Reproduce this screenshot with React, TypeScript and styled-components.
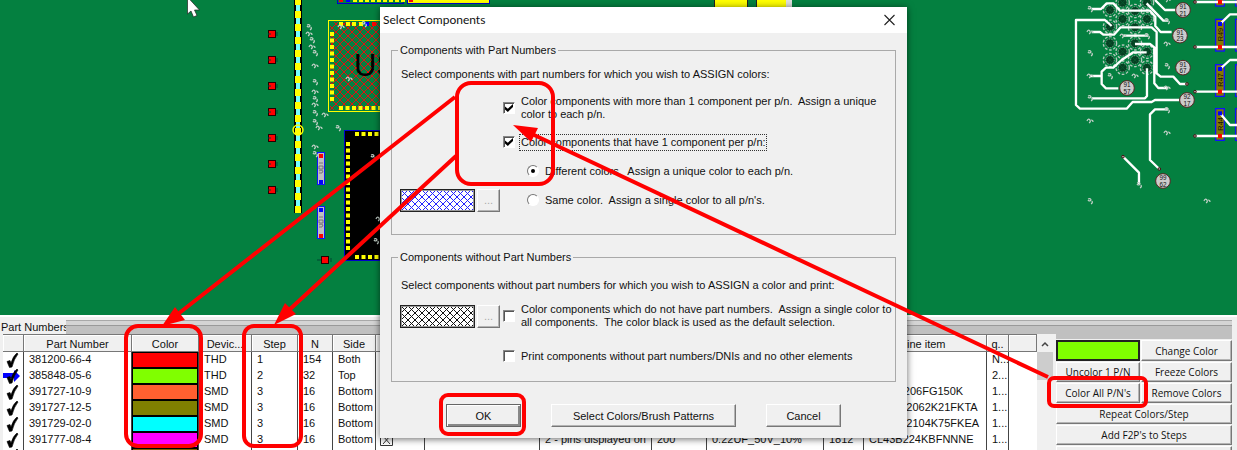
import React from "react";
import styled, { createGlobalStyle, css } from "styled-components";

const sans = '"Liberation Sans", Arial, sans-serif';
const titleFont = 'Lato, "Liberation Sans", sans-serif';
const ui = '"Open Sans", "Noto Sans", sans-serif';

const GlobalStyle = createGlobalStyle`
  *, *::before, *::after { box-sizing: border-box; }
  body { margin: 0; background: #f0f0f0; color: #111; font: 11px/14px ${sans}; }
  button, input { font: inherit; color: inherit; margin: 0; padding: 0; }
`;

const Screen = styled.main`
  position: relative;
  display: flex;
  flex-direction: column;
  height: 100vh;
  overflow: hidden;
`;

const BoardArt = styled.svg`
  display: block;
  flex: none;
  width: 100%;
  height: 315px;
  background: #048040;
`;

const Panel = styled.section`
  flex: 1;
  min-height: 0;
  display: flex;
  flex-direction: column;
  border-top: 2px solid #fff;
  background: #f0f0f0;
`;

const PanelHeading = styled.header`
  display: flex;
  flex: none;
  height: 16px;
  margin-top: 1px;
`;

const PanelTitle = styled.h2`
  margin: 0;
  padding: 2px 0 0 1px;
  width: 66px;
  white-space: nowrap;
  font: 11px/14px ${sans};
`;

const Grip = styled.div`
  flex: 1;
  margin: 2px 5px 0 0;
  border-top: 1px solid #a8a8a8;
  background: linear-gradient(#d4d4d4 0 4px, #999 4px 5px, #c0c0c0 5px);
`;

const PanelBody = styled.div`
  flex: 1;
  min-height: 0;
  display: flex;
  padding: 0 5px 0 3px;
`;

const TableArea = styled.div`
  flex: 1;
  min-width: 0;
  overflow: hidden;
  background: #fff;
  border-top: 1px solid #777;
`;

const Grid = styled.table`
  width: 100%;
  table-layout: fixed;
  border-collapse: separate;
  border-spacing: 0;
`;

const HeadCell = styled.th`
  height: 17px;
  padding: 1px 0 0;
  border-right: 1px solid #777;
  border-bottom: 1px solid #777;
  background: #f0f0f0;
  box-shadow: inset 1px 1px #fff;
  font-weight: normal;
  line-height: 14px;
  white-space: nowrap;
  overflow: hidden;
`;

const Cell = styled.td<{ $bare?: boolean }>`
  height: 16px;
  padding: 0 0 2px 5px;
  border-right: 1px solid #444;
  line-height: 14px;
  white-space: nowrap;
  overflow: hidden;
  ${(p) => p.$bare && css`padding: 0;`}
`;

const ColorChip = styled.div<{ $color: string }>`
  height: 16px;
  border: 1px solid #000;
  background: ${(p) => p.$color};
`;

const CellIcon = styled.svg`
  display: block;
  width: 19px;
  height: 16px;
`;

const ScrollBar = styled.div`
  flex: none;
  width: 16px;
  margin-right: 3px;
  background: #f0f0f0;
`;

const ScrollUp = styled.button`
  display: block;
  width: 16px;
  height: 18px;
  border: 0;
  background: none;
`;

const ScrollThumb = styled.div`
  height: 28px;
  background: #cdcdcd;
`;

const Actions = styled.div`
  flex: none;
  width: 176px;
  display: grid;
  grid-template-columns: 84px 91px;
  grid-template-rows: 21px;
  grid-auto-rows: 20px;
  align-content: start;
  gap: 1px;
  padding-top: 6px;
  box-shadow: inset 0 5px #c0c0c0;
`;

const raised = css`
  border: 1px solid;
  border-color: #fff #777 #777 #fff;
  background: #f0f0f0;
  box-shadow: inset -1px -1px #b4b4b4;
`;

const ActionButton = styled.button<{ $wide?: boolean }>`
  ${raised}
  font: 10px/16px ${ui};
  white-space: nowrap;
  ${(p) => p.$wide && css`grid-column: span 2;`}
`;

const CurrentColor = styled.button`
  border: 2px solid #222;
  background: #80ff00;
`;

const Dialog = styled.section`
  position: absolute;
  top: 7px;
  left: 380px;
  width: 527px;
  background: #f0f0f0;
  box-shadow: 0 1px 7px rgba(0, 0, 0, 0.6);
`;

const TitleBar = styled.header`
  display: flex;
  align-items: center;
  justify-content: space-between;
  height: 26px;
  padding: 0 11px 0 3px;
  background: #fff;
`;

const Title = styled.h1`
  margin: 0;
  font: 12px/16px ${titleFont};
`;

const CloseButton = styled.button`
  display: flex;
  border: 0;
  background: none;
`;

const DialogBody = styled.form`
  display: flex;
  flex-direction: column;
  gap: 15px;
  padding: 10px 11px 11px;
`;

const Group = styled.fieldset<{ $roomy?: boolean }>`
  min-width: 0;
  margin: 0;
  border: 1px solid #a9a9a9;
  padding: ${(p) => (p.$roomy ? "14px 8px 17px" : "10px 8px 26px")};
`;

const Legend = styled.legend`
  margin-left: -2px;
  padding: 0 2px;
`;

const Intro = styled.p<{ $gap: number }>`
  margin: 0 0 ${(p) => p.$gap}px 1px;
`;

const Options = styled.div<{ $gap: number }>`
  display: grid;
  row-gap: ${(p) => p.$gap}px;
`;

const OptionRow = styled.div<{ $tall?: boolean }>`
  display: grid;
  grid-template-columns: 103px 1fr;
  grid-template-rows: 100%;
  align-items: center;
  height: ${(p) => (p.$tall ? 26 : 16)}px;
  line-height: 13px;
`;

const BrushPicker = styled.div`
  display: flex;
  gap: 2px;
`;

const BrushSwatch = styled.svg`
  width: 75px;
  height: 23px;
  border: 1px solid #222;
  outline: 1px solid #999;
  outline-offset: -2px;
  background: #fff;
`;

const BrushButton = styled.button`
  ${raised}
  width: 23px;
  height: 23px;
  color: #aaa;
`;

const Option = styled.label<{ $nested?: boolean }>`
  grid-column: 2;
  display: flex;
  align-items: center;
  gap: 5px;
  padding-left: ${(p) => (p.$nested ? 24 : 0)}px;
`;

const OptionText = styled.span<{ $focused?: boolean }>`
  padding: 1px 0 1px 1px;
  white-space: pre;
  ${(p) => p.$focused && css`outline: 1px dotted #333;`}
`;

const Tick = styled.input`
  appearance: none;
  flex: none;
  width: 12px;
  height: 12px;
  border: 1px solid;
  border-color: #888 #fff #fff #888;
  background: #fff;
  box-shadow: inset 1px 1px #555;

  &:checked::after {
    content: "";
    display: block;
    width: 8px;
    height: 8px;
    margin: 1px;
    background: #000;
    clip-path: polygon(0 30%, 35% 58%, 100% 0, 100% 38%, 35% 100%, 0 68%);
  }
`;

const Radio = styled.input`
  appearance: none;
  flex: none;
  width: 12px;
  height: 12px;
  border: 1px solid;
  border-color: #777 #fff #fff #777;
  border-radius: 50%;
  background: #fff;

  &:checked::after {
    content: "";
    display: block;
    width: 4px;
    height: 4px;
    margin: 3px;
    border-radius: 50%;
    background: #000;
  }
`;

const DialogActions = styled.footer`
  display: flex;
  gap: 30px;
  margin-top: 7px;
  padding-left: 55px;
`;

const DialogButton = styled.button<{ $wide?: boolean; $primary?: boolean }>`
  ${raised}
  width: ${(p) => (p.$wide ? 185 : 75)}px;
  height: 23px;
  ${(p) => p.$primary && css`
    border-color: #666;
    box-shadow: inset 1px 1px #fff, inset -2px -2px #888;
  `}
`;

const Markup = styled.svg`
  position: absolute;
  inset: 0;
  width: 100%;
  height: 100%;
  pointer-events: none;
`;

const range = (n: number, start: number, step: number) =>
  Array.from({ length: n }, (_, i) => start + i * step);

function Pads({ points, fill = "#ff0", size = 4 }: { points: number[][]; fill?: string; size?: number }) {
  return (
    <g fill={fill}>
      {points.map(([x, y]) => (
        <rect key={`${x},${y}`} x={x - size / 2} y={y - size / 2} width={size} height={size} />
      ))}
    </g>
  );
}

function Vias({ points }: { points: number[][] }) {
  return (
    <g fill="none" stroke="#c4d0c8" strokeWidth="1.2">
      {points.map(([x, y], i) => (
        <path
          key={`${x},${y}`}
          d={i % 2 ? "M-3 0q1-3 3-1q1 2-1 3M1-1q2 0 2 2" : "M-2-2q3-1 3 1q-2 2-3 0M2 0q1 2-1 3"}
          transform={`translate(${x} ${y})`}
        />
      ))}
    </g>
  );
}

function ChipResistor({ y, flip }: { y: number; flip?: boolean }) {
  return (
    <g>
      <rect x="317.5" y={y + 0.5} width="7" height="32" fill="#c0c0c0" stroke="#11f" />
      <Pads points={[[321, y + 4]]} fill={flip ? "#00f" : "#f00"} />
      <Pads points={[[321, y + 30]]} fill={flip ? "#f00" : "#00f"} />
      <path
        d={`M319 ${y + 14}h4v3h-4zM319 ${y + 19}q2-2 4 0q0 3-4 2M319 ${y + 11}h4`}
        fill="none"
        stroke="#666"
        strokeWidth=".8"
      />
    </g>
  );
}

const leftVias = [
  [309, 27], [309, 34], [312, 40], [312, 47], [315, 53], [315, 66], [315, 82], [315, 92], [315, 99],
  [315, 105], [315, 113], [325, 115], [315, 122], [319, 128], [338, 128], [315, 147], [315, 154],
  [341, 27], [364, 24], [349, 79], [373, 157], [379, 219], [376, 241],
];

const rightVias = [
  [1090, 9], [1090, 32], [1090, 53], [1090, 76], [1090, 98], [1090, 121], [1090, 201], [1207, 201],
  [1167, 21], [1167, 44], [1167, 66], [1167, 88], [1167, 110], [1167, 133], [1110, 76], [1135, 76],
  [1139, 185], [1123, 36], [1147, 36], [1167, 0],
];

const ballGrid = [
  [630, 30], [630, 80], [630, 130], [630, 180], [668, 8], [668, 57], [668, 155], [668, 203],
  [705, 33], [705, 82], [705, 130], [705, 180], [741, 8], [741, 57], [741, 155], [741, 203],
];

const traces = [
  "M575 27H603L620 10H640L660 32H740",
  "M635 78L615 60H528V315L540 326H680L698 306H755L765 300H838",
  "M575 96H600L610 104H642L662 82H755L770 96V220L782 230H820L840 252H860",
  "M670 107H745",
  "M570 228H605M740 157H700L665 180L640 203H618L605 215V252L618 265H655",
  "M705 132H750L763 142V250L775 264H805",
  "M575 295H735L741 288V205",
  "M765 0L795 30H828",
  "M740 10L790 62H805",
  "M735 32H750L766 50V78L782 96H815",
  "M805 328H765L750 343V480L778 507",
  "M669 470L717 518V552",
  "M885 6H1100M885 141H1100M885 275H1100M885 408H1100",
  "M960 72L990 43H1100M960 207L990 180H1100M960 340L990 375H1100",
];

const testPoints: [number, number, string, string][] = [
  [849, 30, "91", "21"], [840, 107, "91", "23"], [849, 203, "91", "67"],
  [681, 264, "91", "57"], [861, 300, "92", "17"], [789, 543, "99", "62"],
];

const resistors: [string, number][] = [["", -77], ["R49", 58], ["R47", 194], ["R44", 326]];

function Board() {
  return (
    <BoardArt role="img" aria-label="Circuit board layout">
      <defs>
        <pattern id="redHatch" width="8" height="8" patternUnits="userSpaceOnUse">
          <path d="M0 0L8 8M8 0L0 8" stroke="#e01010" strokeWidth="1" />
        </pattern>
      </defs>

      {range(7, 34, 26).map((y) => (
        <g key={y}>
          <rect x="268.5" y={y - 3.5} width="7" height="7" fill="#f00" stroke="#200" />
          <path d={`M268 ${y}h3M277 ${y - 2}v4`} stroke="#043" />
        </g>
      ))}
      <rect x="321.5" y="256.5" width="7" height="7" fill="#f00" stroke="#200" />
      <path d="M317 260h4M331 258v4" stroke="#043" />

      <rect x="294" y="-2" width="8" height="215" fill="#000" />
      <rect x="296" y="-2" width="4" height="214" fill="#7ff" />
      {range(17, 1, 13).map((y) => (
        <path key={y} d={`M295 ${y - 3}h6v7h-6z`} fill="#ff0" />
      ))}
      <circle cx="298" cy="130" r="5" fill="none" stroke="#ff0" strokeWidth="1.4" />

      <rect x="337.5" y="-5" width="66" height="8.5" fill="#048040" stroke="#00c" />
      <Pads points={range(9, 355, 6).map((x) => [x, 0])} />
      <Pads points={[[341, 0]]} fill="#f00" />
      <Pads points={[[348, 0]]} fill="#00f" />
      <rect x="407.5" y="-5" width="82" height="8.5" fill="#ff0" stroke="#00c" />
      <Pads points={[[411, 0]]} fill="#f00" />
      <path d="M715 0h32v7h-32zM757 0h29v7h-29z" fill="#ff0" />
      <path d="M714.5 0v7M756.5 0v7M747.5 0v7" stroke="#222" />
      <path d="M786 0h6v7h-6z" fill="#ddd" />

      <rect x="328.5" y="20.5" width="90" height="91" fill="none" stroke="#ff0" />
      <rect x="330" y="22" width="88" height="88" fill="url(#redHatch)" />
      <Pads points={range(11, 34, 6.5).map((y) => [332, y])} />
      <Pads points={[341, 348, 354, 361].map((x) => [x, 24])} />
      <Pads points={[[367, 24]]} fill="#00f" />
      <Pads points={[[374, 24]]} fill="#f00" />
      <Pads points={range(7, 341, 6.5).map((x) => [x, 108])} />
      <text x="354" y="76" fontSize="31" fontFamily="Liberation Sans, sans-serif">US</text>

      <rect x="344.5" y="130.5" width="120" height="130" fill="#000" stroke="#00c" />
      <Pads points={range(17, 144, 6.5).map((y) => [348, y])} />
      <Pads points={range(4, 357, 6.5).map((x) => [x, 134])} />
      <Pads points={range(4, 357, 6.5).map((x) => [x, 257])} />

      <ChipResistor y={152} />
      <ChipResistor y={206} flip />
      <Vias points={leftVias} />

      <g transform="translate(900 0) scale(.3333)">
        {ballGrid.map(([x, y]) => (
          <g key={`${x},${y}`} fill="none">
            <circle cx={x} cy={y} r="12" fill="#063f22" />
            <circle cx={x} cy={y} r="20" stroke="#b8c8be" strokeWidth="4" strokeDasharray="8 5" />
            <circle cx={x} cy={y} r="13" stroke="#8a9a90" strokeWidth="3" strokeDasharray="4 4" />
            <path d={`M${x - 8} ${y - 8}l16 16M${x + 8} ${y - 8}l-16 16`} stroke="#06552c" strokeWidth="3" />
          </g>
        ))}
        {resistors.map(([name, y]) => (
          <g key={y}>
            {[947, 1007].map((x) => (
              <rect key={x} x={x} y={y} width="26" height="95" fill="#867800" stroke="#11f" strokeWidth="4" />
            ))}
            {name && (
              <text transform={`translate(968 ${y + 66}) rotate(-90)`} fontSize="22" fill="#111">{name}</text>
            )}
          </g>
        ))}
        <path d={traces.join("")} fill="none" stroke="#fff" strokeWidth="7" strokeLinejoin="round" />
        <Pads points={[[960, 72], [960, 207], [960, 340]]} fill="#00f" size={12} />
        <Pads points={[[960, 6], [960, 141], [960, 275], [960, 408]]} fill="#f00" size={12} />
        {[[861, 252], [885, 6], [885, 141], [885, 275], [885, 408], [669, 470], [778, 507]].map(([x, y]) => (
          <circle key={`${x},${y}`} cx={x} cy={y} r="4" fill="#aaa" stroke="#411" strokeWidth="3" />
        ))}
        {testPoints.map(([x, y, a, b]) => (
          <g key={`${x},${y}`} fontSize="19" textAnchor="middle" fill="#111">
            <circle cx={x} cy={y} r="22" fill="#ccc" stroke="#522" strokeWidth="3" />
            <text x={x} y={y - 3}>{a}</text>
            <text x={x} y={y + 17}>{b}</text>
          </g>
        ))}
      </g>
      <Vias points={rightVias} />
      <path d="M187.5-3V14L191 11L193.5 17L197 15.5L194.5 10H199.5Z" fill="#fff" stroke="#222" strokeWidth=".7" />
    </BoardArt>
  );
}

const columns: [string, number][] = [
  ["", 21], ["Part Number", 108], ["Color", 67], ["Devic...", 53], ["Step", 46], ["N", 35], ["Side", 43],
  ["DNI", 49], ["Description", 115], ["Comment", 112], ["Height", 55], ["Value", 117], ["Size", 40],
  ["line item", 123], ["q..", 22],
];

type Part = {
  pn: string;
  color: string;
  dev: string;
  step: string;
  n: string;
  side: string;
  item?: string;
  q: string;
  current?: boolean;
  details?: string[];
};

const parts: Part[] = [
  { pn: "381200-66-4", color: "#f00", dev: "THD", step: "1", n: "154", side: "Both", q: "N..." },
  { pn: "385848-05-6", color: "#80ff00", dev: "THD", step: "2", n: "32", side: "Top", q: "2...", current: true },
  { pn: "391727-10-9", color: "#ff6030", dev: "SMD", step: "3", n: "16", side: "Bottom", item: "CRM-1206FG150K", q: "1..." },
  { pn: "391727-12-5", color: "#808000", dev: "SMD", step: "3", n: "16", side: "Bottom", item: "RCCA12062K21FKTA", q: "1..." },
  { pn: "391729-02-0", color: "#0ff", dev: "SMD", step: "3", n: "16", side: "Bottom", item: "RCCA12104K75FKEA", q: "1..." },
  {
    pn: "391777-08-4", color: "#f0f", dev: "SMD", step: "3", n: "16", side: "Bottom", item: "CL43B224KBFNNNE", q: "1...",
    details: ["2 - pins displayed on", "200", "0.22UF_50V_10%", "1812"],
  },
  { pn: "", color: "#806000", dev: "", step: "", n: "", side: "", q: "" },
];

function PartRow({ part }: { part: Part }) {
  const details = part.details ?? ["", "", "", ""];
  return (
    <tr>
      <Cell $bare>
        <CellIcon>
          {part.current && <path d="M0 5H11V2L17 8L11 14V10H0Z" fill="#00f" />}
          <path d="M4 9.5L7 8.5L8 11Q10 4 14 1L15 2Q11 7 9 15L6.5 15.5Z" fill="#000" stroke="#000" strokeWidth=".6" />
        </CellIcon>
      </Cell>
      <Cell>{part.pn}</Cell>
      <Cell $bare><ColorChip $color={part.color} /></Cell>
      <Cell>{part.dev}</Cell>
      <Cell>{part.step}</Cell>
      <Cell>{part.n}</Cell>
      <Cell>{part.side}</Cell>
      <Cell $bare>
        <CellIcon>
          <path d="M4.5 2.5h12v11h-12zM7 4l7 8M14 4l-7 8" fill="none" stroke="#333" />
        </CellIcon>
      </Cell>
      <Cell />
      {details.map((text, i) => <Cell key={i}>{text}</Cell>)}
      <Cell>{part.item}</Cell>
      <Cell>{part.q}</Cell>
      <td />
    </tr>
  );
}

function Brush({ id, color, label }: { id: string; color: string; label: string }) {
  return (
    <BrushPicker>
      <BrushSwatch role="img" aria-label={label}>
        <defs>
          <pattern id={id} width="7" height="7" patternUnits="userSpaceOnUse">
            <path d="M0 0L7 7M7 0L0 7" stroke={color} />
          </pattern>
        </defs>
        <rect width="100%" height="100%" fill={`url(#${id})`} />
      </BrushSwatch>
      <BrushButton type="button" disabled aria-label={`Choose ${label}`}>...</BrushButton>
    </BrushPicker>
  );
}

function SelectComponents() {
  return (
    <Dialog role="dialog" aria-labelledby="dialog-title">
      <TitleBar>
        <Title id="dialog-title">Select Components</Title>
        <CloseButton type="button" aria-label="Close">
          <svg width="13" height="12"><path d="M1.5 1L11.5 11M11.5 1L1.5 11" stroke="#222" strokeWidth="1.1" /></svg>
        </CloseButton>
      </TitleBar>
      <DialogBody onSubmit={(e) => e.preventDefault()}>
        <Group>
          <Legend>Components with Part Numbers</Legend>
          <Intro $gap={14}>Select components with part numbers for which you wish to ASSIGN colors:</Intro>
          <Options $gap={13}>
            <OptionRow $tall>
              <Option>
                <Tick type="checkbox" defaultChecked />
                <OptionText>{"Color components with more than 1 component per p/n.  Assign a unique\ncolor to each p/n."}</OptionText>
              </Option>
            </OptionRow>
            <OptionRow>
              <Option>
                <Tick type="checkbox" defaultChecked />
                <OptionText $focused>Color components that have 1 component per p/n:</OptionText>
              </Option>
            </OptionRow>
            <OptionRow>
              <Option $nested>
                <Radio type="radio" name="single" defaultChecked />
                <OptionText>{"Different colors.  Assign a unique color to each p/n."}</OptionText>
              </Option>
            </OptionRow>
            <OptionRow>
              <Brush id="blueBrush" color="#22f" label="single part brush" />
              <Option $nested>
                <Radio type="radio" name="single" />
                <OptionText>{"Same color.  Assign a single color to all p/n's."}</OptionText>
              </Option>
            </OptionRow>
          </Options>
        </Group>
        <Group $roomy>
          <Legend>Components without Part Numbers</Legend>
          <Intro $gap={11}>Select components without part numbers for which you wish to ASSIGN a color and print:</Intro>
          <Options $gap={19}>
            <OptionRow $tall>
              <Brush id="blackBrush" color="#111" label="unnumbered part brush" />
              <Option>
                <Tick type="checkbox" />
                <OptionText>{"Color components which do not have part numbers.  Assign a single color to\nall components.  The color black is used as the default selection."}</OptionText>
              </Option>
            </OptionRow>
            <OptionRow>
              <Option>
                <Tick type="checkbox" />
                <OptionText>Print components without part numbers/DNIs and no other elements</OptionText>
              </Option>
            </OptionRow>
          </Options>
        </Group>
        <DialogActions>
          <DialogButton $primary type="submit">OK</DialogButton>
          <DialogButton $wide type="button">Select Colors/Brush Patterns</DialogButton>
          <DialogButton type="button">Cancel</DialogButton>
        </DialogActions>
      </DialogBody>
    </Dialog>
  );
}

function Callouts() {
  return (
    <Markup aria-hidden="true">
      <g fill="none" stroke="#f00" strokeWidth="4">
        <rect x="457" y="83" width="96" height="101" rx="14" />
        <rect x="126" y="326" width="75" height="120" rx="12" />
        <rect x="244" y="326" width="57" height="120" rx="10" />
        <rect x="441" y="395" width="83" height="39" rx="7" />
        <rect x="1049" y="378" width="97" height="28" rx="5" />
        <path d="M455 97L178 314M456 156L288 311M1048 377L532 134" />
      </g>
      <path d="M162 326L175 307L185 320ZM274 325L285 303L296 314ZM513 125L538 128L531 142Z" fill="#f00" />
    </Markup>
  );
}

export default function App() {
  return (
    <Screen>
      <GlobalStyle />
      <Board />
      <Panel>
        <PanelHeading>
          <PanelTitle>Part Numbers</PanelTitle>
          <Grip />
        </PanelHeading>
        <PanelBody>
          <TableArea>
            <Grid>
              <colgroup>
                {columns.map(([name, width]) => <col key={name} width={width} />)}
                <col />
              </colgroup>
              <thead>
                <tr>
                  {columns.map(([name]) => <HeadCell key={name} scope="col">{name}</HeadCell>)}
                  <HeadCell />
                </tr>
              </thead>
              <tbody>
                {parts.map((part) => <PartRow key={part.pn} part={part} />)}
              </tbody>
            </Grid>
          </TableArea>
          <ScrollBar>
            <ScrollUp type="button" aria-label="Scroll up">
              <svg width="8" height="6"><path d="M1 5L4 2L7 5" fill="none" stroke="#444" strokeWidth="1.5" /></svg>
            </ScrollUp>
            <ScrollThumb />
          </ScrollBar>
          <Actions>
            <CurrentColor type="button" aria-label="Current color" />
            <ActionButton type="button">Change Color</ActionButton>
            <ActionButton type="button">Uncolor 1 P/N</ActionButton>
            <ActionButton type="button">Freeze Colors</ActionButton>
            <ActionButton type="button">Color All P/N's</ActionButton>
            <ActionButton type="button">Remove Colors</ActionButton>
            <ActionButton type="button" $wide>Repeat Colors/Step</ActionButton>
            <ActionButton type="button" $wide>Add F2P's to Steps</ActionButton>
            <ActionButton type="button" $wide aria-label="More actions" />
          </Actions>
        </PanelBody>
      </Panel>
      <SelectComponents />
      <Callouts />
    </Screen>
  );
}
